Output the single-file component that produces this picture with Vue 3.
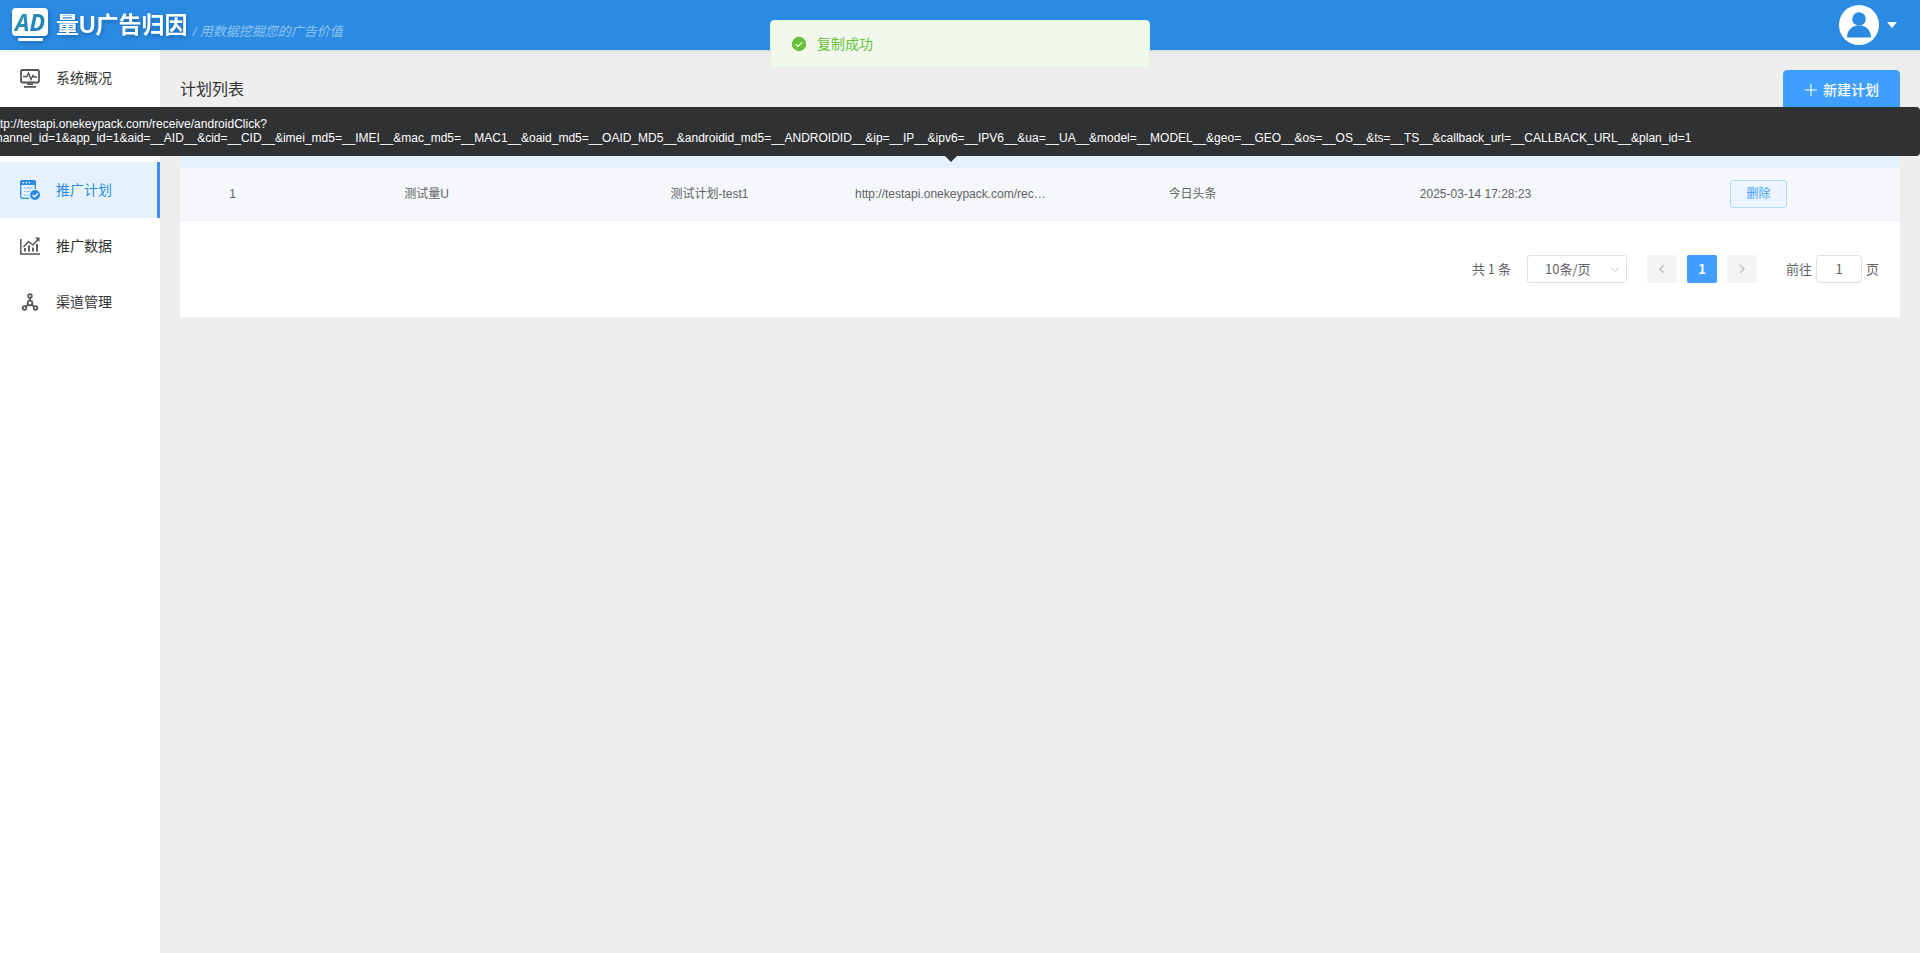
<script setup>
import { ref } from 'vue';

const menus = ref([
  { name: '系统概况', icon: 'monitor' },
  { name: '', icon: 'app' },
  { name: '推广计划', icon: 'plan' },
  { name: '推广数据', icon: 'chart' },
  { name: '渠道管理', icon: 'channel' },
]);
const active = ref('推广计划');

const plans = ref([
  {
    id: 1,
    app: '测试量U',
    name: '测试计划-test1',
    url: 'http://testapi.onekeypack.com/receive/androidClick?channel_id=1&app_id=1&aid=__AID__&cid=__CID__&imei_md5=__IMEI__&mac_md5=__MAC1__&oaid_md5=__OAID_MD5__&androidid_md5=__ANDROIDID__&ip=__IP__&ipv6=__IPV6__&ua=__UA__&model=__MODEL__&geo=__GEO__&os=__OS__&ts=__TS__&callback_url=__CALLBACK_URL__&plan_id=1',
    channel: '今日头条',
    time: '2025-03-14 17:28:23',
  },
]);

const pageSize = ref(10);
const page = ref(1);
</script>

<template>
  <div class="layout">
    <header class="header">
      <svg class="logo" width="40" height="40" viewBox="0 0 40 40">
        <defs>
          <linearGradient id="adFill" x1="0" y1="0" x2="1" y2="1">
            <stop offset="0" stop-color="#2b9fb4" />
            <stop offset="1" stop-color="#1c76b8" />
          </linearGradient>
        </defs>
        <rect x="2" y="3" width="36" height="28" rx="4" fill="#fff" />
        <text x="20" y="26" text-anchor="middle" class="logo-text" fill="url(#adFill)">AD</text>
        <rect x="8" y="33" width="25" height="3" rx="1" fill="#fff" />
      </svg>
      <h1 class="brand">量U广告归因</h1>
      <span class="slogan">/ 用数据挖掘您的广告价值</span>
      <button class="user" type="button" aria-label="用户菜单">
        <svg width="40" height="40" viewBox="0 0 40 40">
          <circle cx="20" cy="20" r="20" fill="#fff" />
          <circle cx="20" cy="14" r="6.800" fill="#2b8be2" />
          <path d="M8 32.500C8 25 13 20.500 20 20.500S32 25 32 32.500Z" fill="#2b8be2" />
        </svg>
        <svg width="10" height="6" viewBox="0 0 10 6"><path d="M0 0h10L5 6z" fill="#fff" /></svg>
      </button>
    </header>

    <div class="body">
      <nav class="sidebar">
        <a
          v-for="item in menus"
          :key="item.icon"
          href="#"
          class="menu-item"
          :class="{ active: item.name === active }"
          @click.prevent="active = item.name"
        >
          <svg v-if="item.icon === 'monitor'" width="20" height="20" viewBox="0 0 20 20" fill="none" stroke="#555">
            <rect x="1" y="2" width="18" height="12.500" rx="1.500" stroke-width="1.800" />
            <path d="M3 8.500h4l1.500-3.500 2.500 6.500 2-4 1 1.500h3" stroke-width="1.400" />
            <path d="M7 16.200h6M4 18.800h12" stroke-width="1.700" />
          </svg>
          <svg v-else-if="item.icon === 'app'" width="20" height="20" viewBox="0 0 20 20" fill="none" stroke="#555" stroke-width="1.500">
            <path d="M2 2h6v6H2zM12 2h6v6h-6zM2 12h6v6H2zM12 12h6v6h-6z" />
          </svg>
          <svg v-else-if="item.icon === 'plan'" width="20" height="20" viewBox="0 0 20 20" fill="none" stroke="#2b8be2">
            <path d="M9.500 18.300H2.500Q.7 18.300.7 16.500V2.500Q.7.700 2.500.700h11q1.800 0 1.800 1.800V9" stroke-width="1.300" />
            <path d="M0 5V2.500Q0 0 2.500 0h11Q16 0 16 2.500V5z" fill="#2b8be2" stroke="none" />
            <path d="M2.500 2.600h1.500M5.500 2.600H7M8.500 2.600H10" stroke="#fff" stroke-width="1.300" />
            <path d="M4 8h1.500M7 8h5.500M4 11.500h1.500M7 11.500h2.500M4 15h1.500M7 15h1.500" stroke-width="1" stroke="#6fb1ea" />
            <circle cx="15" cy="15" r="5" fill="#2b8be2" stroke="none" />
            <path d="M12.500 15l2 1.800 3.300-3.300" stroke="#fff" stroke-width="1.300" />
          </svg>
          <svg v-else-if="item.icon === 'chart'" width="20" height="20" viewBox="0 0 20 20" fill="none" stroke="#555">
            <path d="M.8 3v15H20" stroke-width="1.500" />
            <path d="M5 15.500V12M9 15.500V9.500M13 15.500V11.500M17 15.500V8" stroke-width="1.900" />
            <path d="M3.500 11L8.500 5.500l4.500 3.500 5-5.500" stroke-width="1.500" />
            <path d="M15 1.500h4.500V6z" fill="#555" stroke="none" />
          </svg>
          <svg v-else width="20" height="20" viewBox="0 0 20 20" fill="none" stroke="#555" stroke-width="1.800">
            <circle cx="10" cy="4" r="1.800" />
            <circle cx="10" cy="11" r="2.300" />
            <circle cx="4.500" cy="16" r="1.800" />
            <circle cx="15.500" cy="16" r="1.800" />
            <path d="M10 6v2.500M8.200 12.500l-2.200 2.200M11.800 12.500l2.200 2.200" />
          </svg>
          <span>{{ item.name }}</span>
        </a>
      </nav>

      <main class="main">
        <div class="title-bar">
          <h2>计划列表</h2>
          <button class="btn-add" type="button">
            <svg width="14" height="14" viewBox="0 0 14 14"><path d="M7 1v12M1 7h12" stroke="#fff" stroke-width="1.100" /></svg>
            <span>新建计划</span>
          </button>
        </div>

        <section class="card">
          <table class="table">
            <colgroup>
              <col class="col-id">
              <col>
              <col>
              <col class="col-url">
              <col>
              <col>
              <col>
            </colgroup>
            <thead>
              <tr>
                <th v-for="n in 7" :key="n" scope="col"></th>
              </tr>
            </thead>
            <tbody>
              <tr v-for="plan in plans" :key="plan.id">
                <td>{{ plan.id }}</td>
                <td>{{ plan.app }}</td>
                <td>{{ plan.name }}</td>
                <td>{{ plan.url }}</td>
                <td>{{ plan.channel }}</td>
                <td>{{ plan.time }}</td>
                <td><button class="btn-delete" type="button">删除</button></td>
              </tr>
            </tbody>
          </table>

          <div class="pagination">
            <span class="total">共 {{ plans.length }} 条</span>
            <div class="size">
              <select v-model="pageSize" aria-label="每页条数">
                <option :value="10">10条/页</option>
                <option :value="20">20条/页</option>
                <option :value="50">50条/页</option>
              </select>
              <svg width="10" height="6" viewBox="0 0 10 6"><path d="M1 .5l4 4 4-4" fill="none" stroke="#c0c4cc" /></svg>
            </div>
            <div class="pager">
              <button type="button" disabled aria-label="上一页">
                <svg width="8" height="10" viewBox="0 0 8 10"><path d="M6 1L2 5l4 4" fill="none" stroke="#c0c4cc" stroke-width="1.700" /></svg>
              </button>
              <button type="button" class="current">1</button>
              <button type="button" disabled aria-label="下一页">
                <svg width="8" height="10" viewBox="0 0 8 10"><path d="M2 1l4 4-4 4" fill="none" stroke="#c0c4cc" stroke-width="1.700" /></svg>
              </button>
            </div>
            <label class="jump">前往<input v-model="page" type="text">页</label>
          </div>
        </section>
      </main>
    </div>

    <div class="tooltip" role="tooltip">{{ plans[0].url }}</div>

    <div class="message" role="alert">
      <svg width="16" height="16" viewBox="0 0 16 16">
        <circle cx="8" cy="8" r="7.200" fill="#67c23a" />
        <path d="M4.600 8.200l2.400 2.200 4.300-4.300" fill="none" stroke="#f0f9eb" stroke-width="1.200" />
      </svg>
      <p>复制成功</p>
    </div>
  </div>
</template>

<style>
body {
  margin: 0;
  background: #eee;
}
</style>

<style scoped>
.layout {
  display: flex;
  flex-direction: column;
  position: relative;
  min-height: 100vh;
  overflow: hidden;
  font-family: "Liberation Sans", "Noto Sans CJK SC", sans-serif;
  font-size: 14px;
  line-height: 20px;
  color: #333;
}

button,
input,
select {
  box-sizing: border-box;
  font-family: inherit;
  line-height: inherit;
  cursor: pointer;
}

.header {
  display: flex;
  align-items: center;
  height: 50px;
  padding: 0 23px 0 10px;
  background: #2b8be2;
  box-shadow: 0 1px 4px rgba(0, 21, 41, 0.12);
  z-index: 1;
}

.logo,
.brand {
  filter: drop-shadow(1px 2px 2px rgba(0, 60, 110, 0.4));
}

.logo-text {
  font: italic bold 23px "Open Sans", sans-serif;
}

.brand {
  margin: 0 0 0 6px;
  font-size: 23px;
  font-weight: 700;
  line-height: 48px;
  color: #fff;
}

.slogan {
  margin-left: 5px;
  padding-top: 13px;
  font-size: 13px;
  font-style: italic;
  color: #90c2ef;
}

.user {
  display: flex;
  align-items: center;
  gap: 8px;
  margin-left: auto;
  padding: 0;
  border: none;
  background: none;
}

.body {
  display: flex;
  flex: 1;
}

.sidebar {
  flex: 0 0 160px;
  background: #fff;
}

.menu-item {
  display: flex;
  align-items: center;
  gap: 16px;
  height: 56px;
  padding-left: 20px;
  color: #333;
  text-decoration: none;
}

.menu-item.active {
  border-right: 3px solid #3d90ff;
  background: #e5f2fc;
  color: #2b8be2;
}

.main {
  flex: 1;
  min-width: 0;
  padding: 20px;
}

.title-bar {
  display: flex;
  align-items: center;
  justify-content: space-between;
  margin-bottom: 10px;
}

.title-bar h2 {
  margin: 0;
  font-size: 16px;
  font-weight: 400;
}

.btn-add {
  display: flex;
  align-items: center;
  gap: 5px;
  height: 40px;
  padding: 0 20px;
  border: 1px solid #409eff;
  border-radius: 4px;
  background: #409eff;
  color: #fff;
  font-size: 14px;
  font-weight: 500;
}

.card {
  background: #fff;
}

.table {
  width: 100%;
  table-layout: fixed;
  border-collapse: separate;
  border-spacing: 0;
  font-size: 12px;
  color: #606266;
}

.col-id {
  width: 105px;
}

.col-url {
  width: 200px;
}

.table th,
.table td {
  box-sizing: border-box;
  padding: 0 4px;
  border-bottom: 1px solid #ebeef5;
  text-align: center;
  overflow: hidden;
  white-space: nowrap;
  text-overflow: ellipsis;
}

.table th {
  height: 48px;
  background: #e5f2fc;
}

.table td {
  height: 53px;
  background: #f5f7fa;
}

.btn-delete {
  height: 28px;
  padding: 0 15px;
  border: 1px solid #b3d8ff;
  border-radius: 3px;
  background: #ecf5ff;
  color: #409eff;
  font-size: 12px;
}

.pagination {
  display: flex;
  align-items: center;
  justify-content: flex-end;
  padding: 34px 21px;
  font-family: "Noto Sans CJK SC", sans-serif;
  font-size: 13px;
  line-height: 28px;
  color: #606266;
}

.size {
  position: relative;
  display: flex;
  margin: 0 20px 0 16px;
}

.size select {
  width: 100px;
  height: 28px;
  padding: 0 26px 0 17px;
  border: 1px solid #dcdfe6;
  border-radius: 3px;
  appearance: none;
  background: #fff;
  color: #606266;
  font-size: 13px;
  line-height: 26px;
}

.size svg {
  position: absolute;
  top: 12px;
  right: 7px;
  pointer-events: none;
}

.pager {
  display: flex;
  gap: 10px;
}

.pager button {
  display: flex;
  align-items: center;
  justify-content: center;
  width: 30px;
  height: 28px;
  padding: 0;
  border: none;
  border-radius: 2px;
  background: #f4f4f5;
  font-size: 13px;
}

.pager .current {
  background: #409eff;
  color: #fff;
  font-weight: 700;
}

.jump {
  display: flex;
  gap: 4px;
  margin-left: 29px;
}

.jump input {
  width: 46px;
  height: 28px;
  padding: 0;
  border: 1px solid #dcdfe6;
  border-radius: 4px;
  color: #606266;
  font-size: 13px;
  text-align: center;
}

.tooltip {
  position: absolute;
  top: 107px;
  left: -20px;
  right: 0;
  padding: 10px 10px 11px;
  border-radius: 4px;
  background: #303133;
  color: #fff;
  font-size: 12px;
  line-height: 14px;
  z-index: 2;
}

.tooltip::after {
  content: "";
  position: absolute;
  top: 100%;
  left: 50%;
  margin-left: -5px;
  border: 6px solid transparent;
  border-top-color: #303133;
  border-bottom: none;
}

.message {
  position: absolute;
  top: 20px;
  left: 50%;
  display: flex;
  align-items: center;
  gap: 10px;
  box-sizing: border-box;
  width: 380px;
  height: 48px;
  margin-left: -190px;
  padding: 0 20px;
  border: 1px solid #e1f3d8;
  border-radius: 4px;
  background: #f0f9eb;
  color: #67c23a;
  z-index: 3;
}

.message p {
  margin: 0;
}
</style>
